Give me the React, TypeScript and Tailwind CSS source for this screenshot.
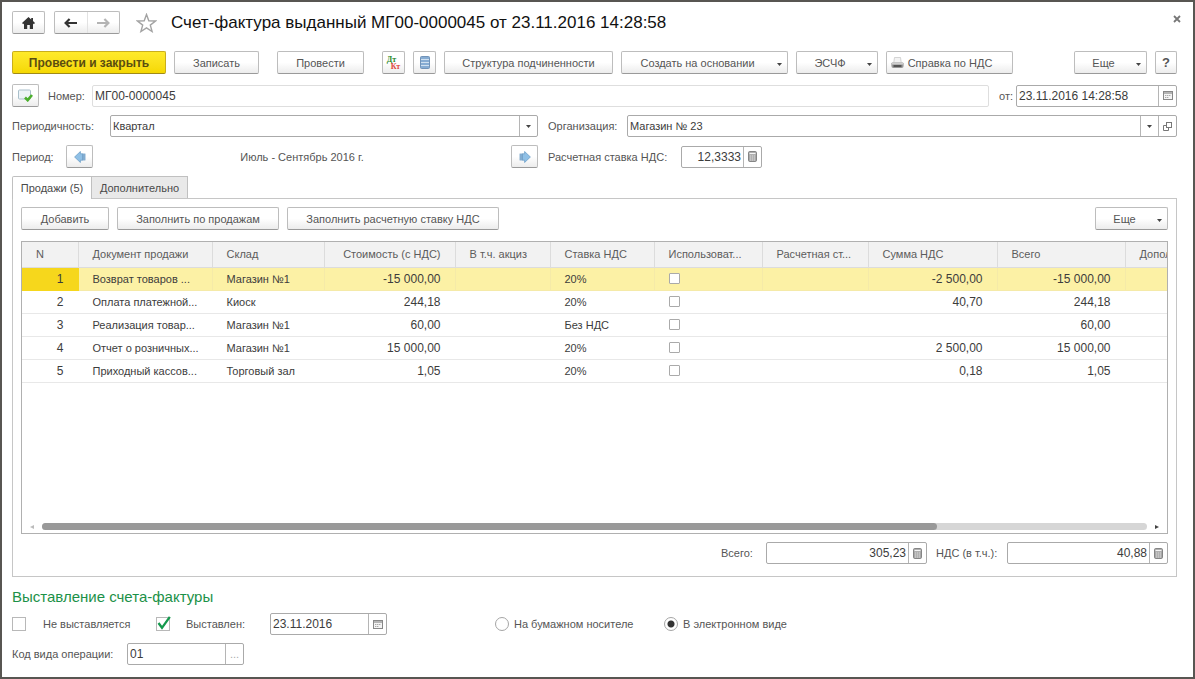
import { useState, type ReactNode } from "react";
import clsx from "clsx";

type Row = {
  doc: string;
  store: string;
  cost: string;
  rate: string;
  vat: string;
  total: string;
};

const ROWS: Row[] = [
  { doc: "Возврат товаров ...", store: "Магазин №1", cost: "-15 000,00", rate: "20%", vat: "-2 500,00", total: "-15 000,00" },
  { doc: "Оплата платежной...", store: "Киоск", cost: "244,18", rate: "20%", vat: "40,70", total: "244,18" },
  { doc: "Реализация товар...", store: "Магазин №1", cost: "60,00", rate: "Без НДС", vat: "", total: "60,00" },
  { doc: "Отчет о розничных...", store: "Магазин №1", cost: "15 000,00", rate: "20%", vat: "2 500,00", total: "15 000,00" },
  { doc: "Приходный кассов...", store: "Торговый зал", cost: "1,05", rate: "20%", vat: "0,18", total: "1,05" },
];

const COLUMNS = [
  { title: "N", className: "w-[56px]" },
  { title: "Документ продажи", className: "w-[134px]" },
  { title: "Склад", className: "w-[112px]" },
  { title: "Стоимость (с НДС)", className: "w-[131px]" },
  { title: "В т.ч. акциз", className: "w-[95px]" },
  { title: "Ставка НДС", className: "w-[104px]" },
  { title: "Использоват...", className: "w-[108px]" },
  { title: "Расчетная ст...", className: "w-[106px]" },
  { title: "Сумма НДС", className: "w-[129px]" },
  { title: "Всего", className: "w-[128px]" },
  { title: "Дополнительно", className: "w-[130px]" },
];

function Button({
  children,
  className,
  menu,
  primary,
  label,
}: {
  children: ReactNode;
  className?: string;
  menu?: boolean;
  primary?: boolean;
  label?: string;
}) {
  return (
    <button
      type="button"
      aria-label={label}
      className={clsx(
        "flex h-[23px] shrink-0 items-center justify-center rounded-[2px] border whitespace-nowrap",
        primary
          ? "border-[#c9ae1c] border-b-[#a08a18] bg-linear-to-b from-[#ffea2a] to-[#f5d800] text-[12px] font-bold text-[#5a4d10]"
          : "border-[#bdbdbd] border-b-[#9a9a9a] bg-linear-to-b from-white from-50% to-[#ececec] text-[#555]",
        className
      )}
    >
      {menu ? (
        <>
          <span className="flex-1 pl-0.5 text-center">{children}</span>
          <span className="w-4 pt-1">
            <Caret />
          </span>
        </>
      ) : (
        children
      )}
    </button>
  );
}

function Caret() {
  return (
    <svg width="5" height="3" viewBox="0 0 5 3" className="mx-auto" aria-hidden="true">
      <path d="M0 0h5L2.5 3z" fill="#444" />
    </svg>
  );
}

function CalendarIcon() {
  return (
    <svg width="10" height="9" viewBox="0 0 10 9" aria-hidden="true">
      <rect x=".5" y=".5" width="9" height="8" fill="#f4f4f4" stroke="#888" />
      <path d="M1 2h8" stroke="#999" strokeWidth="1.4" />
      <path d="M2 4.5h6M2 6.5h4" stroke="#aaa" strokeDasharray="1.4 .6" />
    </svg>
  );
}

function CalculatorIcon() {
  return (
    <svg width="9" height="11" viewBox="0 0 9 11" aria-hidden="true">
      <rect x=".5" y=".5" width="8" height="10" rx="1.2" fill="#a9a9a9" stroke="#858585" />
      <path d="M1.5 2.5h6" stroke="#f5f5f5" strokeWidth="1.2" />
      <path d="M2 5h5M2 7h5M2 9h5" stroke="#dedede" strokeDasharray="1.2 .7" />
    </svg>
  );
}

function OpenIcon() {
  return (
    <svg width="9" height="9" viewBox="0 0 9 9" fill="none" stroke="#777" aria-hidden="true">
      <rect x="3.5" y=".5" width="5" height="5" />
      <path d="M3 3.5H.5v5h5V6" />
    </svg>
  );
}

function ArrowBlue({ flip }: { flip?: boolean }) {
  return (
    <svg width="12" height="12" viewBox="0 0 12 12" className={clsx(flip && "rotate-180")} aria-hidden="true">
      <path d="M.6 6 6.4.5v2.3h2.2v6.4H6.400v2.300z" fill="#8fc0e6" stroke="#6fa0c8" strokeWidth=".8" />
      <path d="M8.400 2.600h3v6.800h-3z" fill="#6d9cc4" />
      <path d="M10 3v6" stroke="#a9cdea" strokeWidth=".7" />
    </svg>
  );
}

function Segment({ label, children }: { label: string; children: ReactNode }) {
  return (
    <button
      type="button"
      aria-label={label}
      className="flex w-[18px] shrink-0 items-center justify-center border-l border-[#b5b5b5]"
    >
      {children}
    </button>
  );
}

function Field({
  id,
  value,
  className,
  right,
  light,
  children,
}: {
  id: string;
  value: string;
  className?: string;
  right?: boolean;
  light?: boolean;
  children?: ReactNode;
}) {
  return (
    <div
      className={clsx(
        "flex h-[22px] rounded-[2px] border bg-white",
        light ? "border-[#dedede]" : "border-[#aaa]",
        className
      )}
    >
      <input
        id={id}
        defaultValue={value}
        className={clsx("min-w-0 flex-1 px-[2px] text-[12px] text-[#3c3c3c] outline-none", right && "text-right")}
      />
      {children}
    </div>
  );
}

function Select({ id, options, children }: { id: string; options: string[]; children?: ReactNode }) {
  return (
    <div className="flex h-[22px] min-w-0 flex-1 rounded-[2px] border border-[#aaa] bg-white">
      <select id={id} className="min-w-0 flex-1 appearance-none px-[2px] text-[#3c3c3c] outline-none">
        {options.map((o) => (
          <option key={o}>{o}</option>
        ))}
      </select>
      <span className="flex w-[18px] shrink-0 items-center border-l border-[#b5b5b5]">
        <Caret />
      </span>
      {children}
    </div>
  );
}

function Check({ id, checked, onChange }: { id: string; checked: boolean; onChange: () => void }) {
  return (
    <span className="relative flex">
      <input
        id={id}
        type="checkbox"
        checked={checked}
        onChange={onChange}
        className="size-[14px] appearance-none border border-[#b8b8b8] bg-white"
      />
      {checked && (
        <svg
          width="14"
          height="14"
          viewBox="0 0 14 14"
          className="pointer-events-none absolute bottom-px left-px"
          aria-hidden="true"
        >
          <path d="m1.5 7 3.5 4.8L12.8.8" fill="none" stroke="#14994d" strokeWidth="2.3" />
        </svg>
      )}
    </span>
  );
}

function TitleBar() {
  return (
    <div className="flex items-center">
      <Button label="Главная" className="w-[33px]">
        <svg width="13" height="12" viewBox="0 0 13 12" fill="#333" aria-hidden="true">
          <path d="M6.5 0 0 6l1.2 1.2L2 6.5V12h3.2V8h2.6v4H11V6.5l.8.7L13 6l-2-1.9V1H9.2v1.4z" />
        </svg>
      </Button>
      <div className="ml-[9px] flex h-[23px] w-[66px] rounded-[2px] border border-[#bdbdbd] border-b-[#9a9a9a] bg-linear-to-b from-white from-50% to-[#ececec]">
        <button type="button" aria-label="Назад" className="flex flex-1 items-center justify-center border-r border-[#e2e2e2]">
          <svg width="13" height="10" viewBox="0 0 13 10" fill="none" stroke="#333" strokeWidth="2.2" aria-hidden="true">
            <path d="M13 5H2M5.6 1 1.6 5l4 4" />
          </svg>
        </button>
        <button type="button" aria-label="Вперед" className="flex flex-1 items-center justify-center">
          <svg width="13" height="10" viewBox="0 0 13 10" fill="none" stroke="#b4b4b4" strokeWidth="2.2" aria-hidden="true">
            <path d="M0 5h11M7.4 1l4 4-4 4" />
          </svg>
        </button>
      </div>
      <button type="button" aria-label="В избранное" className="ml-4">
        <svg width="21" height="20" viewBox="0 0 21 20" fill="none" stroke="#a3a3a3" strokeWidth="1.4" aria-hidden="true">
          <path d="m10.5 1.5 2.3 6.2 6.7.3-5.2 4.1 1.8 6.4-5.6-3.6-5.6 3.6 1.8-6.4L1.5 8l6.7-.3z" />
        </svg>
      </button>
      <h1 className="ml-[14px] flex-1 text-[17px] text-[#111]">
        Счет-фактура выданный МГ00-0000045 от 23.11.2016 14:28:58
      </h1>
      <button type="button" aria-label="Закрыть" className="-mr-2 self-start p-1">
        <svg width="8" height="8" viewBox="0 0 8 8" stroke="#777" strokeWidth="1.8" aria-hidden="true">
          <path d="m1 1 6 6M7 1 1 7" />
        </svg>
      </button>
    </div>
  );
}

function Toolbar() {
  return (
    <div className="mt-[17px] flex items-center gap-[18px]">
      <div className="flex gap-2">
        <Button primary className="w-[154px]">Провести и закрыть</Button>
        <Button className="w-[85px]">Записать</Button>
      </div>
      <Button className="w-[87px]">Провести</Button>
      <div className="flex flex-1 gap-2">
        <Button label="Движения документа" className="w-[23px]">
          <span className="flex flex-col font-['Liberation_Serif',serif] text-[8px] leading-[7px] font-bold">
            <span className="pr-1 text-[#2c8a2c]">Дт</span>
            <span className="pl-1 text-[#e0483c]">Кт</span>
          </span>
        </Button>
        <Button label="Журнал" className="w-[23px]">
          <svg width="10" height="13" viewBox="0 0 10 13" aria-hidden="true">
            <rect x=".5" y=".5" width="9" height="12" rx="1" fill="#86acd3" stroke="#7193b8" />
            <path d="M1 3.5h8M1 6.5h8M1 9.5h8" stroke="#cfe0f0" />
          </svg>
        </Button>
        <Button className="w-[169px]">Структура подчиненности</Button>
        <Button menu className="w-[167px]">Создать на основании</Button>
        <Button menu className="w-[82px]">ЭСЧФ</Button>
        <Button className="w-[127px] gap-1 pr-4">
          <svg width="13" height="12" viewBox="0 0 13 12" aria-hidden="true">
            <path d="M3.5.5h6l.8 5.5H2.7z" fill="#f3f3f3" stroke="#c4c4c4" strokeWidth=".7" />
            <path d="M1 5.5h11l.6 1V9q0 2-2 2H2.4q-2 0-2-2V6.5z" fill="#999" />
            <path d="M1 5.5h11v2H1z" fill="#cfcfcf" />
            <path d="M2.5 9h8" stroke="#444" strokeWidth="1.6" />
          </svg>
          Справка по НДС
        </Button>
      </div>
      <div className="flex gap-2">
        <Button menu className="w-[73px]">Еще</Button>
        <Button label="Справка" className="w-[22px] text-[13px] font-bold">?</Button>
      </div>
    </div>
  );
}

function SalesTable() {
  const [used, setUsed] = useState<boolean[]>(ROWS.map(() => false));

  return (
    <div className="mt-[11px] flex h-[293px] flex-col overflow-hidden border border-[#b0b0b0]">
      <div className="flex-1 overflow-hidden">
        <table className="w-[1233px] table-fixed text-left">
          <thead>
            <tr className="h-[25px] bg-[#f2f2f2] text-[#5c5c5c]">
              {COLUMNS.map((c, i) => (
                <th
                  key={c.title}
                  className={clsx(
                    "border-r border-b border-[#dcdcdc] pl-[14px] font-normal whitespace-nowrap",
                    i === 3 && "pr-[14px] text-right",
                    c.className
                  )}
                >
                  {c.title}
                </th>
              ))}
            </tr>
          </thead>
          <tbody className="text-[#3c3c3c]">
            {ROWS.map((r, i) => {
              const cell = clsx(
                "border-r border-b pl-[14px] whitespace-nowrap",
                i === 0 ? "border-[#f5eaa8] bg-[#fcf1a5]" : "border-r-transparent border-b-[#e8e8e8]"
              );
              const number = clsx(cell, "pr-[14px] text-right text-[12px]");
              return (
                <tr key={r.doc} className="h-[23px]">
                  <td
                    className={clsx(
                      "border-r border-b pr-[14px] text-right text-[12px]",
                      i === 0 ? "border-[#f6d71c] bg-[#f6d71c]" : "border-r-transparent border-b-[#e8e8e8]"
                    )}
                  >
                    {i + 1}
                  </td>
                  <td className={cell}>{r.doc}</td>
                  <td className={cell}>{r.store}</td>
                  <td className={number}>{r.cost}</td>
                  <td className={cell} />
                  <td className={cell}>{r.rate}</td>
                  <td className={cell}>
                    <input
                      type="checkbox"
                      aria-label={`Использовать расчетную ставку, строка ${i + 1}`}
                      checked={used[i]}
                      onChange={() => setUsed(used.map((u, n) => (n === i ? !u : u)))}
                      className="block size-[11px] appearance-none rounded-[1px] border border-[#aaa] bg-white checked:bg-[#14994d]"
                    />
                  </td>
                  <td className={cell} />
                  <td className={number}>{r.vat}</td>
                  <td className={number}>{r.total}</td>
                  <td className={cell} />
                </tr>
              );
            })}
          </tbody>
        </table>
      </div>
      <div className="flex h-[13px] items-center gap-2 px-2">
        <svg width="4" height="4" viewBox="0 0 4 4" aria-hidden="true">
          <path d="M4 0v4L0 2z" fill="#bbb" />
        </svg>
        <div className="h-[7px] flex-1 rounded-full bg-[#d6d6d6]">
          <div className="h-full w-[81%] rounded-full bg-[#999]" />
        </div>
        <svg width="4" height="4" viewBox="0 0 4 4" aria-hidden="true">
          <path d="M0 0v4l4-2z" fill="#444" />
        </svg>
      </div>
    </div>
  );
}

export default function App() {
  const [tab, setTab] = useState<"sales" | "extra">("sales");
  const [notIssued, setNotIssued] = useState(false);
  const [issued, setIssued] = useState(true);
  const [medium, setMedium] = useState<"paper" | "electronic">("electronic");

  return (
    <div className="min-h-screen border-2 border-[#585652] bg-white pt-[9px] pr-4 pb-2 pl-[10px] font-['Liberation_Sans',Arial,sans-serif] text-[11px] leading-4 text-[#555]">
      <TitleBar />
      <Toolbar />

      <div className="mt-[10px] flex items-center">
        <Button label="Статус документа" className="w-[27px]">
          <svg width="15" height="13" viewBox="0 0 15 13" aria-hidden="true">
            <rect x=".5" y="1" width="12" height="9" rx="1" fill="#eef4f8" stroke="#a9bfca" />
            <path d="M7 8.5 9.7 11.2 14 6" fill="none" stroke="#4caf2e" strokeWidth="2.6" />
          </svg>
        </Button>
        <label htmlFor="number" className="ml-[9px] w-11">Номер:</label>
        <Field id="number" value="МГ00-0000045" light className="flex-1" />
        <label htmlFor="date" className="ml-[10px] w-[17px]">от:</label>
        <Field id="date" value="23.11.2016 14:28:58" className="w-[161px]">
          <Segment label="Выбрать дату">
            <CalendarIcon />
          </Segment>
        </Field>
      </div>

      <div className="mt-2 grid grid-cols-[526fr_629fr] items-center gap-x-[10px] gap-y-2">
        <div className="flex items-center">
          <label htmlFor="periodicity" className="w-[98px]">Периодичность:</label>
          <Select id="periodicity" options={["Квартал", "Месяц"]} />
        </div>
        <div className="flex items-center">
          <label htmlFor="org" className="w-[79px]">Организация:</label>
          <Select id="org" options={["Магазин № 23"]}>
            <Segment label="Открыть">
              <OpenIcon />
            </Segment>
          </Select>
        </div>
        <div className="flex items-center">
          <span className="w-[54px]">Период:</span>
          <Button label="Предыдущий период" className="w-[27px]">
            <ArrowBlue />
          </Button>
          <span className="flex-1 text-center">Июль - Сентябрь 2016 г.</span>
          <Button label="Следующий период" className="w-[27px]">
            <ArrowBlue flip />
          </Button>
        </div>
        <div className="flex items-center">
          <label htmlFor="rate" className="w-[133px]">Расчетная ставка НДС:</label>
          <Field id="rate" value="12,3333" right className="w-[81px]">
            <Segment label="Калькулятор">
              <CalculatorIcon />
            </Segment>
          </Field>
        </div>
      </div>

      <div role="tablist" className="mt-2 flex items-end">
        <button
          type="button"
          role="tab"
          aria-selected={tab === "sales"}
          onClick={() => setTab("sales")}
          className="relative z-10 -mb-px h-[23px] w-20 rounded-tl-[2px] border border-b-0 border-[#c0c0c0] bg-white text-[#4a4a4a]"
        >
          Продажи (5)
        </button>
        <button
          type="button"
          role="tab"
          aria-selected={tab === "extra"}
          onClick={() => setTab("extra")}
          className="h-[22px] w-24 border border-b-0 border-l-0 border-[#c0c0c0] bg-[#e9e9e9] text-[#4a4a4a]"
        >
          Дополнительно
        </button>
      </div>
      <div className="border border-[#c6c6c6] px-2 pt-2 pb-3">
        <div className="flex gap-2">
          <Button className="w-[88px]">Добавить</Button>
          <Button className="w-[162px]">Заполнить по продажам</Button>
          <Button className="w-[212px]">Заполнить расчетную ставку НДС</Button>
          <Button menu className="ml-auto w-[73px]">Еще</Button>
        </div>
        <SalesTable />
        <div className="mt-2 flex items-center justify-end">
          <label htmlFor="total" className="w-[45px]">Всего:</label>
          <Field id="total" value="305,23" right className="w-[161px]">
            <Segment label="Калькулятор">
              <CalculatorIcon />
            </Segment>
          </Field>
          <label htmlFor="vat" className="ml-[9px] w-[71px]">НДС (в т.ч.):</label>
          <Field id="vat" value="40,88" right className="w-[161px]">
            <Segment label="Калькулятор">
              <CalculatorIcon />
            </Segment>
          </Field>
        </div>
      </div>

      <h2 className="mt-[10px] text-[15px] leading-5 text-[#1c9148]">Выставление счета-фактуры</h2>
      <div className="mt-[6px] flex items-center">
        <Check id="not-issued" checked={notIssued} onChange={() => setNotIssued(!notIssued)} />
        <label htmlFor="not-issued" className="ml-[17px] w-[113px]">Не выставляется</label>
        <Check id="issued" checked={issued} onChange={() => setIssued(!issued)} />
        <label htmlFor="issued" className="ml-4 w-[84px]">Выставлен:</label>
        <Field id="issue-date" value="23.11.2016" className="w-[117px]">
          <Segment label="Выбрать дату выставления">
            <CalendarIcon />
          </Segment>
        </Field>
        <div role="radiogroup" className="ml-[108px] flex">
          {(
            [
              ["paper", "На бумажном носителе", "w-[169px]"],
              ["electronic", "В электронном виде", ""],
            ] as const
          ).map(([m, text, width]) => (
            <label key={m} className={clsx("flex items-center gap-[5px]", width)}>
              <input
                type="radio"
                name="medium"
                checked={medium === m}
                onChange={() => setMedium(m)}
                className="size-[14px] appearance-none rounded-full border border-[#a5a5a5] bg-white checked:bg-[radial-gradient(circle,#333_3px,transparent_4px)]"
              />
              {text}
            </label>
          ))}
        </div>
      </div>
      <div className="mt-2 flex items-center">
        <label htmlFor="op-code" className="w-[115px]">Код вида операции:</label>
        <Field id="op-code" value="01" className="w-[117px]">
          <Segment label="Выбрать код">
            <span className="text-[#aaa]">...</span>
          </Segment>
        </Field>
      </div>
    </div>
  );
}
